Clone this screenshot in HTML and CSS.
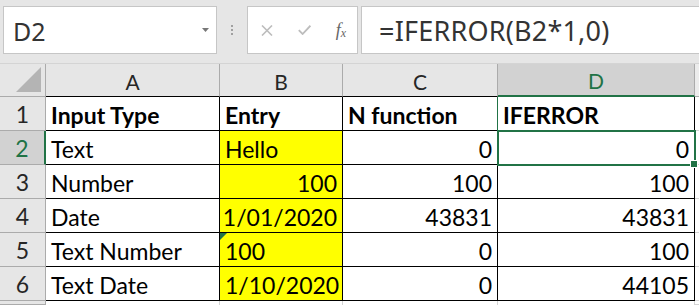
FILE: index.html
```html
<!DOCTYPE html>
<html lang="en">
<head>
    <meta charset="UTF-8">
    <title>IFERROR sheet</title>
    <link rel="stylesheet" href="styles.css">
</head>
<body>
    <div class="formula-bar">
        <div class="name-box">
            <span>D2</span>
            <svg class="drop" width="7" height="4" viewBox="0 0 7 4"><path d="M0 0h7L3.5 4z" fill="#777"/></svg>
        </div>
        <div class="grip">
            <svg width="3" height="11" viewBox="0 0 3 11"><rect x="0" y="0" width="2" height="2" fill="#a0a0a0"/><rect x="0" y="4" width="2" height="2" fill="#a0a0a0"/><rect x="0" y="8" width="2" height="2" fill="#a0a0a0"/></svg>
        </div>
        <div class="fx-buttons">
            <svg width="12" height="11" viewBox="0 0 12 11"><path d="M1 0.5l10 10M11 0.5l-10 10" stroke="#bdbdbd" stroke-width="1.6"/></svg>
            <svg width="13" height="10" viewBox="0 0 13 10"><path d="M0.8 5.2l3.8 3.8 7.8-8.3" stroke="#bdbdbd" stroke-width="1.8" fill="none"/></svg>
            <span class="fx">f<sub>x</sub></span>
        </div>
        <div class="formula-input">=IFERROR(B2*1,0)</div>
    </div>

    <div class="sheet">
        <div class="hd corner"><svg width="26" height="26" viewBox="0 0 26 26"><path d="M0 25L25 0V25z" fill="#b4b4b4"/></svg></div>
        <div class="hd col">A</div>
        <div class="hd col">B</div>
        <div class="hd col">C</div>
        <div class="hd col active">D</div>
        <div class="hd col end"></div>

        <div class="hd row">1</div>
        <div class="cell bold">Input Type</div>
        <div class="cell bold">Entry</div>
        <div class="cell bold d-left">N function</div>
        <div class="cell bold">IFERROR</div>
        <div class="cell end"></div>

        <div class="hd row active">2</div>
        <div class="cell">Text</div>
        <div class="cell fill">Hello</div>
        <div class="cell num">0</div>
        <div class="cell num selected">0</div>
        <div class="cell end"></div>

        <div class="hd row">3</div>
        <div class="cell">Number</div>
        <div class="cell fill num">100</div>
        <div class="cell num">100</div>
        <div class="cell num">100</div>
        <div class="cell end"></div>

        <div class="hd row">4</div>
        <div class="cell">Date</div>
        <div class="cell fill num">1/01/2020</div>
        <div class="cell num">43831</div>
        <div class="cell num">43831</div>
        <div class="cell end"></div>

        <div class="hd row">5</div>
        <div class="cell">Text Number</div>
        <div class="cell fill flag">100</div>
        <div class="cell num">0</div>
        <div class="cell num">100</div>
        <div class="cell end"></div>

        <div class="hd row">6</div>
        <div class="cell">Text Date</div>
        <div class="cell fill">1/10/2020</div>
        <div class="cell num">0</div>
        <div class="cell num">44105</div>
        <div class="cell end"></div>

        <div class="hd row"></div>
        <div class="cell blank"></div>
        <div class="cell blank"></div>
        <div class="cell blank"></div>
        <div class="cell blank"></div>
        <div class="cell end"></div>
    </div>
</body>
</html>
```

FILE: styles.css
```css
* {
    box-sizing: border-box;
}
body {
    margin: 0;
    width: 699px;
    height: 306px;
    overflow: hidden;
    background: #fff;
    font-family: 'Lato', 'Liberation Sans', sans-serif;
}
.formula-bar {
    height: 64px;
    background: #e6e6e6;
    border-bottom: 1px solid #d4d4d4;
    display: flex;
    align-items: flex-start;
    padding-top: 6px;
}
.name-box {
    margin-left: 3px;
    width: 214px;
    height: 48px;
    background: #fff;
    border: 1px solid #c6c6c6;
    display: flex;
    align-items: center;
    justify-content: space-between;
    padding: 0 7px 0 9px;
    font-family: 'Noto Sans', sans-serif;
    font-size: 25px;
    color: #333;
}
.name-box span {
    position: relative;
    top: 1px;
}
.grip {
    width: 30px;
    height: 48px;
    display: flex;
    align-items: center;
    justify-content: center;
}
.fx-buttons {
    width: 111px;
    height: 48px;
    background: #fff;
    border: 1px solid #c6c6c6;
    display: flex;
    align-items: center;
    justify-content: space-between;
    padding: 0 11px 0 13px;
}
.fx {
    font-family: 'Liberation Serif', serif;
    font-style: italic;
    font-size: 18px;
    color: #666;
}
.fx sub {
    font-size: 12px;
    vertical-align: -1px;
}
.formula-input {
    margin-left: 3px;
    flex: 1;
    height: 48px;
    background: #fff;
    border: 1px solid #c6c6c6;
    border-right: none;
    padding-left: 17px;
    display: flex;
    align-items: center;
    font-family: 'Noto Sans', sans-serif;
    font-size: 27px;
    letter-spacing: 0.2px;
    color: #333;
}
.sheet {
    display: grid;
    grid-template-columns: 46px 174px 123px 155px 197px 1fr;
    grid-template-rows: 33px repeat(6, 34px) 1fr;
    height: 241px;
}
.hd {
    background: #e6e6e6;
    color: #262626;
    border-right: 1px solid #ababab;
    border-bottom: 1px solid #ababab;
    display: flex;
    align-items: center;
    justify-content: center;
}
.corner {
    justify-content: flex-end;
    align-items: flex-end;
    padding: 0 3px 3px 0;
}
.hd.col {
    font-size: 21px;
    padding-top: 2px;
    border-bottom-color: #000;
}
.hd.col.active {
    background: #d2d2d2;
    color: #217346;
    border-bottom: 2px solid #217346;
}
.hd.col.end {
    border-right: none;
    border-bottom-color: #ababab;
    background: #ececec;
}
.hd.row {
    font-size: 23px;
    align-items: flex-end;
    padding-bottom: 2px;
}
.hd.row.active {
    background: #d2d2d2;
    color: #217346;
    border-right: 2px solid #217346;
}
.cell {
    border-right: 1px solid #000;
    border-bottom: 1px solid #000;
    display: flex;
    align-items: flex-end;
    padding: 0 5px 2px 5px;
    font-size: 23px;
    line-height: 26px;
    color: #000;
    white-space: nowrap;
}
.bold {
    font-weight: bold;
}
.num {
    justify-content: flex-end;
    padding-right: 5px;
}
.fill {
    background: #ffff00;
}
.d-left {
    border-right-color: #217346;
}
.cell.end {
    border-right: none;
    border-bottom-color: #d4d4d4;
}
.cell.blank {
    border-bottom: none;
    border-right-color: #d4d4d4;
}
.flag {
    position: relative;
}
.flag::before {
    content: "";
    position: absolute;
    left: 0;
    top: 0;
    border-top: 7px solid #217346;
    border-right: 7px solid transparent;
}
.selected {
    position: relative;
    outline: 2px solid #217346;
    outline-offset: -1px;
}
.selected::after {
    content: "";
    position: absolute;
    right: -4px;
    bottom: -4px;
    width: 6px;
    height: 6px;
    background: #217346;
    border: 1px solid #fff;
}
```
